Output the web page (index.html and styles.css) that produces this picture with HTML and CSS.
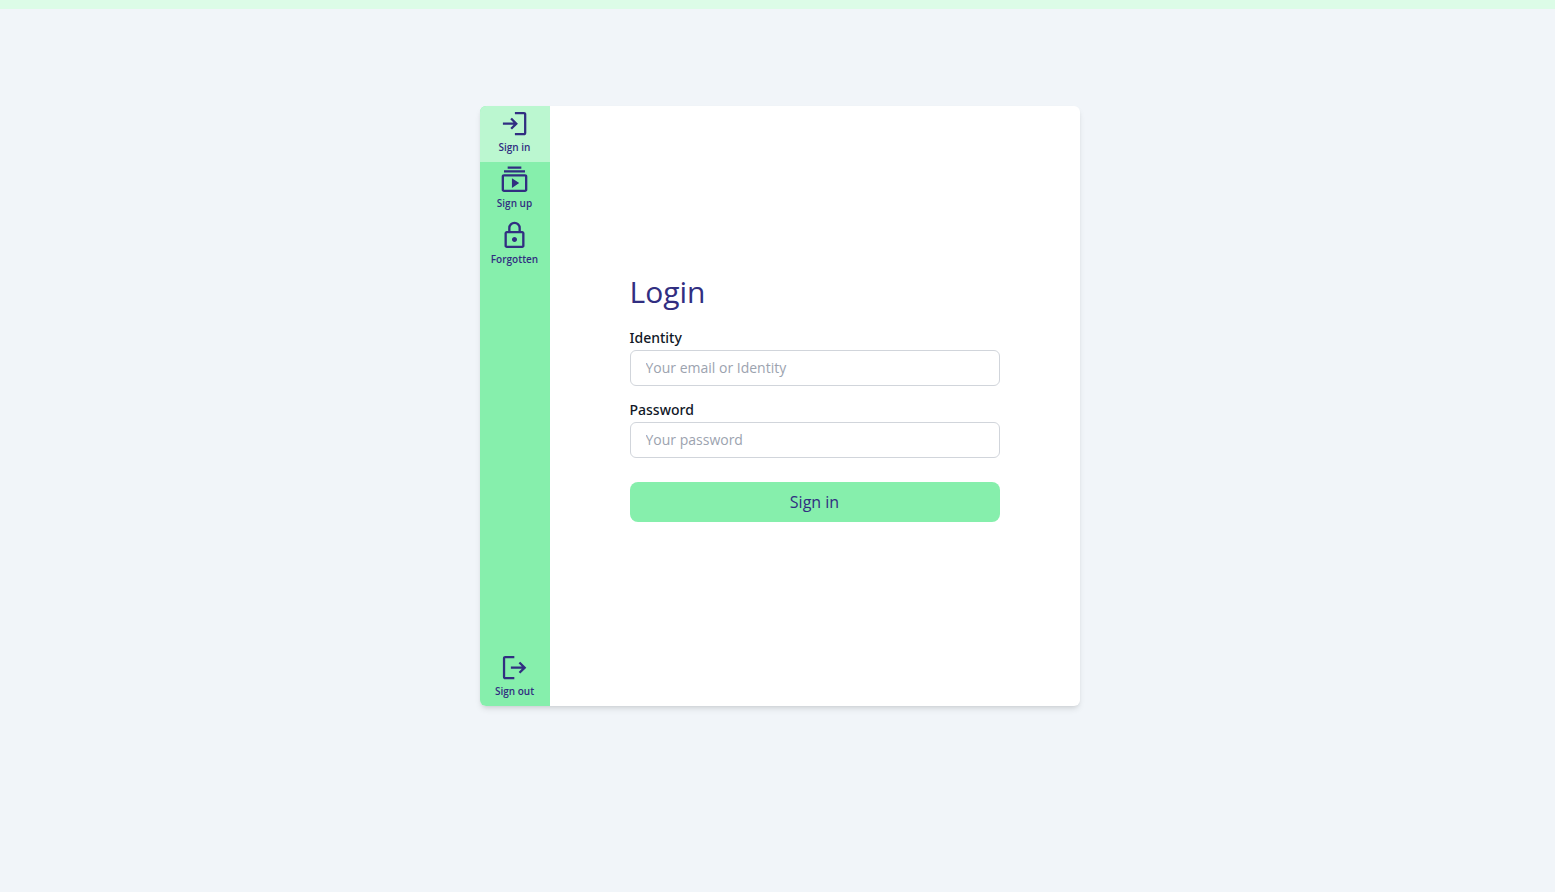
FILE: index.html
```
<!DOCTYPE html>
<html lang="en">
<head>
<meta charset="utf-8">
<meta name="viewport" content="width=device-width, initial-scale=1">
<title>Login</title>
<link rel="stylesheet" href="styles.css">
</head>
<body>
<header class="topbar"></header>
<main class="page">
  <div class="card">
    <nav class="rail">
      <a class="rail-item active" href="#signin">
        <svg class="icon" viewBox="0 -960 984 984" aria-hidden="true"><path d="M489-120v-70h281v-580H489v-70h281q29 0 49.500 20.500T840-770v580q0 29-20.500 49.500T770-120H489Zm-90-176-50-51 98-98H120v-70h325l-98-98 50-51 185 185-183 183Z"/></svg>
        <span>Sign in</span>
      </a>
      <a class="rail-item" href="#signup">
        <svg class="icon" viewBox="15 -955 960 960" aria-hidden="true"><path d="M165-115q-29 0-49.500-20.500T95-185v-395q0-29 20.500-49.500T165-650h630q29 0 49.500 20.500T865-580v395q0 29-20.500 49.500T795-115H165Zm0-70h630v-395H165v395Zm238-50 218-148-218-148v296ZM165-700v-65h630v65H165Zm110-115v-65h410v65H275Z"/></svg>
        <span>Sign up</span>
      </a>
      <a class="rail-item" href="#forgotten">
        <svg class="icon" viewBox="15 -950 960 960" aria-hidden="true"><path d="M250-110q-29 0-49.500-20.500T180-180v-370q0-29 20.500-49.500T250-620h40v-90q0-79 55.500-134.500T480-900q79 0 134.500 55.500T670-710v90h40q29 0 49.500 20.500T780-550v370q0 29-20.500 49.500T710-110H250Zm0-70h460v-370H250v370Zm230-110q31 0 53-22t22-53q0-31-22-53t-53-22q-31 0-53 22t-22 53q0 31 22 53t53 22ZM360-620h240v-90q0-50-35-85t-85-35q-50 0-85 35t-35 85v90Z"/></svg>
        <span>Forgotten</span>
      </a>
      <a class="rail-item signout" href="#signout">
        <svg class="icon" viewBox="0 -960 984 984" aria-hidden="true"><path d="M190-120q-29 0-49.500-20.500T120-190v-580q0-29 20.500-49.500T190-840h281v70H190v580h281v70H190Zm465-176-50-51 98-98H365v-70h336l-98-98 50-51 187 185-185 183Z"/></svg>
        <span>Sign out</span>
      </a>
    </nav>
    <section class="content">
      <form class="form">
        <h1 class="title">Login</h1>
        <div class="field">
          <label class="label" for="identity">Identity</label>
          <input class="input" id="identity" type="text" placeholder="Your email or Identity">
        </div>
        <div class="field">
          <label class="label" for="password">Password</label>
          <input class="input" id="password" type="password" placeholder="Your password">
        </div>
        <button class="submit" type="submit">Sign in</button>
      </form>
    </section>
  </div>
</main>
</body>
</html>
```
FILE: styles.css
```
*, *::before, *::after {
  box-sizing: border-box;
}

body {
  margin: 0;
  min-height: 100vh;
  background: #f1f5f9;
  color: #111827;
  font-family: "Open Sans", "Noto Sans", sans-serif;
}

.topbar {
  height: 9px;
  background: #dcfce7;
}

.page {
  display: flex;
  justify-content: center;
  padding: 97px 0 32px 4px;
}

.card {
  display: flex;
  width: 100%;
  max-width: 600px;
  min-height: 600px;
  overflow: hidden;
  border-radius: 6px;
  background: #fff;
  box-shadow: 0 4px 6px -1px rgba(0, 0, 0, 0.1), 0 2px 4px -2px rgba(0, 0, 0, 0.1);
}

.rail {
  display: flex;
  flex: none;
  flex-direction: column;
  width: 70px;
  background: #86efac;
}

.rail-item {
  display: flex;
  flex-direction: column;
  align-items: center;
  height: 56px;
  padding-top: 2px;
  color: #312e81;
  font-size: 10px;
  font-weight: 600;
  line-height: 14px;
  text-decoration: none;
}

.active {
  background: #bbf7d0;
}

.signout {
  margin-top: auto;
}

.icon {
  width: 32px;
  height: 32px;
  fill: currentColor;
}

.content {
  display: flex;
  flex: 1;
  flex-direction: column;
  justify-content: center;
  padding: 0 80px 16px;
}

.form {
  display: flex;
  flex-direction: column;
}

.title {
  margin: 0 0 18px;
  color: #312e81;
  font-size: 30px;
  font-weight: 400;
  line-height: 36px;
}

.field {
  display: flex;
  flex-direction: column;
  gap: 2px;
  margin-bottom: 14px;
}

.label {
  font-family: "Open Sans Medium", "Noto Sans", sans-serif;
  font-size: 14px;
  font-weight: 500;
  line-height: 20px;
}

.input {
  width: 100%;
  height: 36px;
  padding: 0 15px 2px;
  border: 1px solid #d1d5db;
  border-radius: 6px;
  background: #fff;
  color: inherit;
  font: inherit;
  font-size: 14px;
}

.input::placeholder {
  color: #9ca3af;
  opacity: 1;
}

.submit {
  height: 40px;
  margin-top: 10px;
  border: 0;
  border-radius: 8px;
  background: #86efac;
  color: #312e81;
  font: inherit;
  font-size: 16px;
  cursor: pointer;
}
```
